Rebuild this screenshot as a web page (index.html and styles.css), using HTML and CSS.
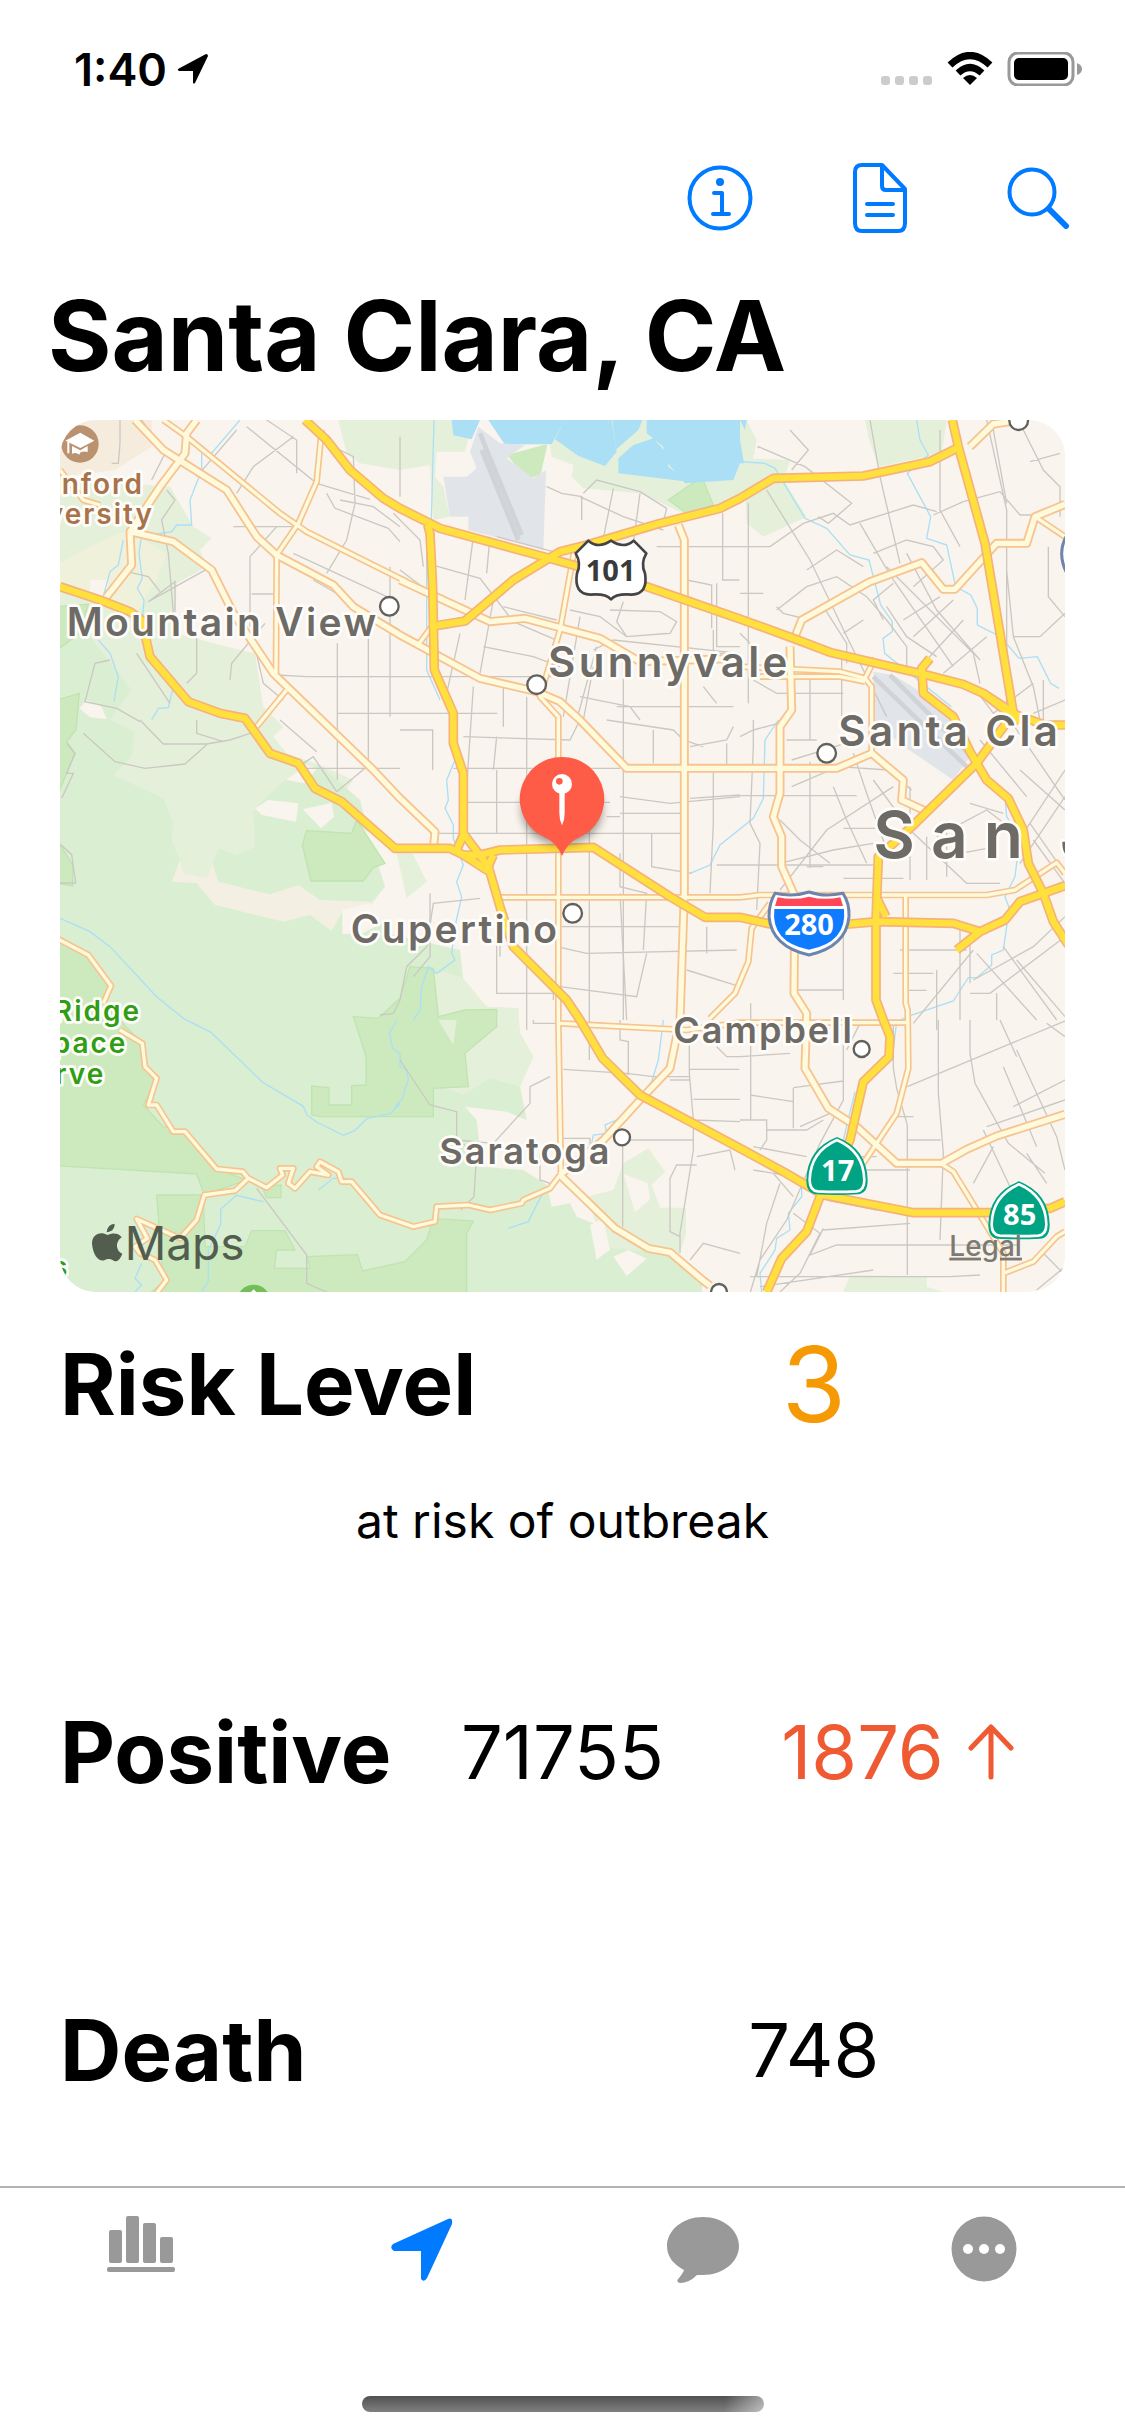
FILE: index.html
```html
<!DOCTYPE html>
<html lang="en">
<head>
<meta charset="utf-8">
<meta name="viewport" content="width=device-width">
<title>Santa Clara, CA</title>
<link rel="stylesheet" href="styles.css">
</head>
<body>
<div class="status">
  <div class="clock">
    <span>1:40</span>
    <svg width="32" height="32" viewBox="0 0 32 32"><path d="M1 16 29 1q2 0 2 2L18 30q-2 2-2-1V18H2q-2-1-1-2z" fill="#000"/></svg>
  </div>
  <div class="signals">
    <svg width="52" height="34" viewBox="0 0 52 34" fill="#ccc"><rect y="24" width="9" height="9" rx="3"/><rect x="14" y="24" width="9" height="9" rx="3"/><rect x="28" y="24" width="9" height="9" rx="3"/><rect x="42" y="24" width="9" height="9" rx="3"/></svg>
    <svg width="46" height="34" viewBox="0 0 46 34" fill="none" stroke="#000" stroke-width="7"><path d="M3 13Q23-6 43 13"/><path d="M11 21q12-11 24 0"/><path d="M16 26q7-6 14 0l-7 7z" fill="#000" stroke="none"/></svg>
    <svg width="76" height="34" viewBox="0 0 76 34"><rect x="2" y="1" width="64" height="32" rx="9" fill="none" stroke="#999" stroke-width="3"/><rect x="7" y="6" width="54" height="22" rx="5"/><path d="M70 11q5 2 5 6t-5 6z" fill="#999"/></svg>
  </div>
</div>

<header class="toolbar">
  <button class="tool" aria-label="Information"><svg width="66" height="66" viewBox="0 0 66 66" fill="none" stroke="#007aff" stroke-width="4"><circle cx="33" cy="33" r="30.500"/><path d="M27 28h8v21M26 49h16" stroke-linecap="round" stroke-linejoin="round"/><circle cx="33" cy="17" r="4" fill="#007aff" stroke="none"/></svg></button>
  <button class="tool" aria-label="Report"><svg width="54" height="70" viewBox="0 0 54 70" fill="none" stroke="#007aff" stroke-width="4" stroke-linejoin="round"><path d="M29 2H9Q2 2 2 9v51q0 8 7 8h36q7 0 7-8V26zV23q0 4 4 4h19M14 41h26M14 52h26" stroke-linecap="round"/></svg></button>
  <button class="tool" aria-label="Search"><svg width="64" height="62" viewBox="0 0 64 62" fill="none" stroke="#007aff" stroke-linecap="round"><circle cx="25" cy="25" r="22.500" stroke-width="4"/><path d="m42 42 17 17" stroke-width="6"/></svg></button>
</header>

<main>
  <h1 class="title">Santa Clara, CA</h1>

  <svg class="map" viewBox="0 0 3015 2616" role="img" aria-label="Map of Santa Clara County">
    <rect width="3015" height="2616" fill="#f9f4ed"/>

    <!-- open land -->
    <g fill="#e5f0da">
      <path d="M0 170 150 185 330 200 400 320 455 355 420 390 440 440 350 490 345 640 540 690 585 700 610 860 670 920 640 950 680 1000 780 1035 880 1080 850 1120 900 1145 975 1400 930 1460 0 1500z"/>
      <path d="M835 0 860 100 900 130 1020 150 1110 135 1120 300 1170 290 1150 200 1125 170 1130 95 1215 95 1240 0z"/>
      <path d="M1300 0 1390 72 1470 75 1475 110 1540 135 1535 170 1570 205 1740 220 1870 280 1980 255 2060 225 2090 60 2060 0z"/>
      <path d="m2050 115 140 5-20 60 70 110-130 60-50-40z"/>
      <path d="m2415 0 10 50 30 90 190-38 15-102z"/>
      <path d="m1580 2330 80-20 30-80 75-45 50 70-40 40 25 68h78v82l-23 60-200 40z"/>
      <path d="m2370 2565 230 5v30l50 16h-300z"/>
    </g>
    <g fill="#f5ecdd"><path d="M0 0h275v80l-110 70-165 20z"/></g>
    <path d="M0 430 90 380 200 330 320 400 290 480 230 580 120 560 0 490z" fill="#f0f1db"/>
    <path d="M90 480h55v60l-55-20z" fill="#f9f4ed"/>
    <g fill="#daeed2">
      <path d="M0 620 90 650 215 810 150 900 225 935 215 1010 160 1065 310 1135 340 1210 335 1260 360 1320 370 1360 440 1375 475 1285 530 1305 585 1280 580 1170 675 1080 780 1035 900 1140 940 1300 975 1400 930 1450 980 1540 1200 1590 1210 1680 1280 1760 1370 1765 1380 1840 1420 1910 1380 2000 1400 2100 1340 2075 1215 2060 1250 2100 1265 2240 1390 2250 1460 2295 1475 2360 1530 2350 1550 2390 1600 2410 1610 2520 1650 2485 1820 2500 1930 2570 1925 2616 0 2616z"/>
      <path d="m1010 1300 40-15 50 100-60 50z" fill="#e5f0da"/>
      <path d="m1060 1680 90-25 60 20 70 85 95 5 5 75 40 70-40 90-90-25-80 50-50-20-60-100z" fill="#e5f0da"/>
    </g>
    <g fill="#f3efe2"><path d="m360 1320 10 40 70 15 18-45 17 55 155 38 85-28 65 45 155 5-10 25-75 0-35 63-65-48-80 20-205-50-55-65-75-5z"/></g>
    <g fill="#f9f4ed">
      <path d="m585 1165 40-25 90 10-7 55-103-20z"/><path d="m728 1168 87-20 7 42-39 35z"/><path d="m678 1080 62-44 30 10-35 44z"/>
      <path d="m847 1470 80-20 60 50-80 40-60 2z"/><path d="m80 840 45 20 15 37-50-5-32-27z"/>
      <path d="m1690 2262 73 27 7 50-45 38z"/><path d="m1590 2415 40-20 20 95-40 28z"/><path d="m1660 2510 45-20 55 26-60 52z"/><path d="m890 1215 50 30 10 35z"/>
    </g>

    <!-- parks -->
    <g fill="#cdeabf" stroke="#c0e4b0" stroke-width="4">
      <path d="m740 1232 135 8 15-40 85 130-35 13-30 40H753l-26-108z"/>
      <path d="M-9 560 85 553 60 640-9 690zM-9 840 58 820l-10 110-28 35 25 35-54 130zM-9 1260l47 75v63l-47-8z"/>
      <path d="M-9 1555 85 1605 153 1697 130 1750 247 1870 255 1940 290 1975 250 2055 310 2120 375 2135 470 2247 560 2280 433 2325 410 2262-9 2237z"/>
      <path d="M290 2325h140l5 155h120l20-48h100l30 58h-55l-7 55h107l-8-35 150-6 16 49 127-28 65-65 20-65 120 8-20 37v196H250l60-50z"/>
      <path d="m605 2300 58-5v38h-43z"/>
      <path d="m880 1790 75 5 65-60 30-95 70 5 15 145 80-20 95-2v52l-95 80 10 100-105 5v85H780l-25-5v-87l52 5v52h68v-58l43-2v-85z"/>
      <path d="m1340 105 110-30 12-1-20 90-40 12z" stroke="none"/><path d="m1825 240 100-70 35 85-80 25z"/>
    </g>
    <path d="m1135 1800 45 75 10-75z" fill="#e5f0da"/>

    <!-- water -->
    <g fill="#abdff5">
      <path d="M1175 0h85l-25 58-55-12zM1285 0h230l-40 72-140 2zM1515 0h140l15 95-35 43-80-30-70-50zM1657 0h90l-12 30-66 58zM1760 0h280v130l-20 50-145 10-60-70-5-40-50-40zM1675 115l45-40 60-20 40 45 5 40 60 45-210-25z"/>
      <path d="M2040 0h20l-5 30zM2040 60l12 70-12 0z"/>
    </g>
    <g fill="none" stroke="#abdff5" stroke-width="4">
      <path d="m540 0-90 105M425 90v60l-35 90 5 75h-45l-15 20-60 10-30 0-8 55 10 75-15 30 20 35-5 60M190 360l-15 75-25 20-20 75M115 660l35 40 25 70-13 75M275 900l20-35 30-2 20-85M1122 0l-8 300M1100 400v350l40 90"/>
      <path d="m2040 125 75 5 30 15 90 150 65 30 70 80 57 15 35 135 35 50v30l-28 20 5 45 200 160M2570 0l10 60 25 45-63 55 70 130-12 65 60 20 27 125 45 25 20 40v50l70 35 55 65 55-5 40 80 25 15"/>
      <path d="m2155 900-40 60-5 175-30 60-100 80-30 60-60 25M1185 1020l-25 60 5 60-10 25 25 50v40l30 80-20 50 15 45-20 90-10 80 10 20-55 40-25-20-20 60-5 70-20 30"/>
      <path d="m0 1495 90 40 60 45 140 150 80 65 83 42 155 150 122 72 10 25 30 22 80 40 35-15 35-35 70-15 30-30M1010 1800l-22 40 10 45 22 15 0 40 20 10 5 30-20 60-20 20M775 2310l45-35h40M525 2325l85 20M530 2325l-48 42v45l-37 80v90l-20 34M245 2530l-20 45 20 20-20 20"/>
      <path d="m2835 1130 5 60 40 60-15 120-30 60 15 40-10 50-10 70-35 15v30l-45 38-25 0-45 70-125 42-45 20-10 80M2385 2015l-35 145M2225 2300v30l-40 50 5 50-40 25-5 35-45 70 5 56M1810 1800l-15 120-20 65-40 50-30 50-70 30 5 25-40 5-10 50-40 50-50 20-15 25-35 25-45 90-60 20"/>
    </g>

    <!-- airfields -->
    <g fill="#e1e5ea"><path d="m1255 20 65 50 75 5-55 40 80 60 38-25-8 240-225-60v-40l-55 0-20-120h70l30-25-20-50z"/><path d="m2440 755 60 10 180 110 60 120-60 85-140-95-100-80z"/></g>
    <g fill="none" stroke="#d0d4d8" stroke-width="14"><path d="m1260 40 125 305M1265 90l110 270M2440 770l280 270M2490 765l240 240"/></g>

    <!-- local streets -->
    <g fill="none" stroke="#cbc8c3" stroke-width="4">
      <path d="M180 0v70l-5 60-20 0M245 0l70 100-40 80M560 20l210 170 160 48M530 30 410 170M620 0l90 60v100M700 50l-120 90-50 80M780 60l100 50 5 140-25 110-60 100M720 320l-200 0M840 240l100 20 80 60M800 220l25 45 160 60 35 40M650 320l-80 90v210M700 400l280 130M760 480l260 150M575 522h75M445 445l-180 100 80-60 0 90M200 455l65 15 35 45M320 210l25 30-40 60 20 100 20 240M230 700l100 150M150 720l-45 10-30 115 95 20 70 40M410 650v110l-30 30M510 780l5-50 100-120M650 765l90 5h750M832 670v410M925 600v430M990 440v450M832 880h480M740 1045h280M580 660l30 130 60 50"/>
      <path d="m240 900 70 72h130l70-12 60-20M70 940l95 85 90 20 120-13 65-58M410 900v40l80 25M660 900l110 95M830 1115l-70-105-30 20M830 1115l90-75M20 970l25 30-25 60 20 0-35 75M0 1272l35 32 12 85H0M960 1785l40-5 20-40 20-100 60-60 20-130 140-15M590 2305l150 200v85l60 26M1020 1920l90 135 80 20v85l60 40-8 130-40 40M1190 2160l110 10 110-120v-50l60-30"/>
      <path d="M1020 50v180M1000 280l80 80 10 80M1020 450l80 60M1240 350l-25 190M1290 350l-10 110M1310 350l170 45M1100 430l160 45 100 130 140 60M1460 200l45 20 60 10 0 70M1570 220l40-40 130 35 80 50-10 40M1660 205l-30 150M1740 220l-20 150M1560 230l130 60 120 40M1790 380h250M1988 280v200h50M1880 480l75 15 0 130M1970 490v190h70M1650 570l150 5 50 30-20 35-130 10-30-45 20-60M1530 570l90 20 80 60 120-10M1330 560l160 40M1270 680l150 30 80 30M1300 540l-40 220M1200 640l-40 180M1240 800l-20 300M1330 800v120M1400 830v1000M1600 690l60-30 380 40M1560 590l-50 300M1600 740l-30 160M1690 700v1100M1670 860h350M1560 830l150 30 30 40M1960 630v70h80M1930 800l40 50M1550 900l60-220"/>
      <path d="M1020 930h98v120M1210 950l320 10 30-60M1640 900l200 30 30 30 60 20M1780 930v100M1180 1045h500M1210 1147h440M1110 1240h760M1310 1050v190M1310 950l-10 100M1588 1040v880M1680 1130l150 20 210-20M1680 1180h180M1640 1190h40M1890 980l110-20 20-40M2000 970v70M1960 1050v160l-10 210M1775 1240v100l120 20M1890 1135l150-10M1970 1335h70M1680 1300v100l80 20-10 170M1870 1520h-380M1490 1580l90 20 450-10M1680 1420l20 380M1940 1520v80M1310 1520v200h180M1500 1700l230 30 30-130M1880 1650l160 50M1480 1740v-20M1110 1420v190l-50 60M1320 1540v70"/>
      <path d="m2040 950 40-20 75-20M2180 960h90M2080 900v80l-10 230 30 60-10 200M2040 1127h350M2040 1335h400M2195 1020l130-40 90-30M2160 1200l60 60 90 70M2160 1330l160-40 120-20M2250 1025v320M2195 1100l140-60 150 10 70 60M2320 1100l40 100 60 130M2380 1000l40 120 60 170M2500 1100l-200 130-140 180M2440 1080l110 150 170 160h100M2350 1225h150M2290 1340h-50M2350 1375h180M2550 1100v280M2600 1250v130M2660 1200v170M2700 1300l110-20M2630 1250l150-80 80 60M2350 1540v200M2520 1590h200M2700 1520v280M2500 1660h120M2630 1650v180M2540 1711h60M2200 1710h150M2730 1540v150M2560 1810l180-220M2740 1680l180-100 95-90M2730 1720h60l225-170M2810 1720v80M2750 1600l180 200M2830 1580l160 220M2870 1620l145 170M2760 960l140 170M2850 900l165 240M2870 1270l145-220M2880 1330l135-200M2920 1260l95 130M2910 1210l105 150M2880 1050l135 120M2730 1150l100 30"/>
      <path d="M2095 85v-5l140 60 140 110-70 60-30-20M2120 210l130 210 120 250 110 220M2190 30l55 60-50 60M2065 250v600M2040 380l90 0 100-70 90-30 50 35 190-60 70 20M2400 310l70 120 30 50 180 260M2430 0l30 170 60 260M2640 30v240l60 110M2620 285l90-40 110-30 60 70 60 0M2780 0l60 270v600M2800 30l40 220M2890 30l60 120 50 50v90M3000 100l-90 25M2965 380v150l50 60M2840 450l20 200 60 150 20 100M2860 650h80l75-70M2150 570l90-70 90-30 90 60 60 70 60 80v60l80 40M2150 560l20 20 80 20M2240 450l90-60 80 50M2480 560l60 90 90 60M2440 400l100-40 80 20 30 40-90 80M2500 490l-60 50 30 60M2480 440l260 260 20 90M2540 400l90 170 130 150M2530 600l110-70M2560 650l120-110M2600 720l110-120M2650 760l130-110M2350 640l60-40M2290 560l70 110v60M2040 520h70M2040 640l30 30M2080 780l70 40h200M2250 780v180M2345 700v200M2740 800l60 80 120-90M2920 880l95-40M2950 900v-120"/>
      <path d="M1510 1948l190 12 80 10h110M1680 1800v60l25 5v100M1510 2155h80v60M1700 2160h200M1688 2170v250M1888 1860v100l12 140v90l-40 250v60M1888 1948h150M1830 1980h60M1900 2038h140M1900 2100l140 5M1910 2210l100-20 15 60M1910 2235h-60l-20 40v160l30 15M1890 2520l40-50 110 30M1970 1880l30 30h40M1420 1800v10h80M1440 2200v80l30 10M2072 1750v350M2040 2100h80v60l-20 30M2040 1910l150-10M2200 2005v120M2200 2003l150-20M2070 2025l130 20M2120 2130h120l50-30M2220 2120l90-40M2350 1820v220l-70 130-100 230-80 120-30 100M2400 1810l-40 80M2500 1805v140l10 60 32 110v450M2542 2000l480-200M2635 1800v220l15 180-10 260M2730 1800v100l15 90 100 180 110 90M2542 2160h100M2500 2090l60 0M2080 2180l160 30M2400 2250l150 0M2300 2340l150 30M2080 2250l120 20M2290 2430l260-20M2290 2425l-40 80 80-30h550M2070 2570h600l90-5M2100 2600l340-50M2830 1940l100 240M2870 1890l120 260 25 100M2780 2120l235-80M2770 2130l80 170M2740 2290l60-110M2900 2200l60 90M2860 2060l155-80M2400 2210l50 0M2820 1800l50 110M2960 1810l55 40M2930 2610l85-70M2950 2500l60 60M2160 2290l-40 120-30 160M2200 2380l80 60-60 120-60 56M2140 2260l60 70"/>
    </g>

    <!-- main roads -->
    <defs>
      <g id="arterials">
        <path d="m225 0 85 90 55 35 135 85 90 140 60 55 170 90 60 65 140 85 240 130 170 40 70 30 60 55 140 145H2330l105-45 95 80-5 60 75 35"/>
        <path d="m410 0-30 40-5 60-75 100-90 135 5 100-75 95M210 335l130 30 115 85 65 130 120 180 300 290 80 85 105 100-5 55"/>
        <path d="M1020 480l270 125 105-10 225 60 120 70 300-10M1855 315l18 45v1060l-13 380-30 145-90 95-110 120-130 105"/>
        <path d="m2190 680 5 190-35 50v200l-20 70 25 60v90l40 90-3 290 38 60-5 165 70 120 85 55 120 110h135l75-42 90-40 205-65"/>
        <path d="m2205 650 20-50 205-115 155-57 65 80h35l125-138h90l25-80 90-37M2730 80l70-68 50-7"/>
        <path d="m1500 2265 165 160 100 60 65 12 100 85 20 15"/>
      </g>
      <g id="collectors">
        <path d="m310 0 70 50 280 230 80 55 300 150M0 150l70 90 50 15M785 30l-15 155-55 125-65 95-2 360M680 810l-90 110M1130 600l-60 80M1545 380l-45 250-60 200 55 60v910l8 465M1310 1432h730l60-7h680l85-15 125-82 25 32"/>
        <path d="M2040 740l300 15 75 20 20 25v200M2100 770h240l75 15M2415 775l30-60M2537 1425v325l6 20 2 175-35 135-100 150M2130 1450l-55 75-10 100-40 95-75 75M1500 1810l380 20 160-22h500M2645 2232l35 23 150 245v116M2830 2560l90-35 70-75 25-15M2925 290l90 60"/>
        <path d="m1500 2265-30 40-80 35-5 10-95 20-65-15-95 5-5 45-65 15-100-35-85-100h-30l-10-30-55-30-10 15 35 25-55-10-45 50-20-15 15-45h-40l8 20-48 38-55-28-17-20-78-8-95-112h-35l-50-80h-25l25-80-35-35-8-70-67-40M130 1750l23-53-68-92-95-50M565 2275l-40 37-92 13-23 75-50 55-130-58 32 58-37 25 15 20 45 20 35 60-35 46"/>
      </g>
      <g id="highways">
        <path d="m735 0 65 60 70 90 100 85 50 30 120 60 310 85 100 28 210 62 280 97 160 58 110 42 290 68 110 28 60 27 100 65 85 30 60 0"/>
        <path d="m1110 620 105-17 145-123 140-85 80-20 220-65 180-45 60-30 100-60 270-7 200-43 80-40M2677 0l18 80 80 290 85 510-110 150-195 190-60 55-40 35-7 190v240l22 60 20 50-3 60-77 75-40 175-40 90-50 80-40 105-75 80-45 101"/>
        <path d="m1103 315 7 25 8 160 5 250 57 130v90l30 90v180l75 100 35 120 40 120 160 160 40 60 68 115 112 110 300 160 130 70 120 70 270 53h230l180-13 45-20"/>
        <path d="m0 500 120 40 90 35 35 25 25 110 115 135 95 35 75 15 75 105 85 30 50 75 80 40 160 140h165l40 20h50l60-15 280-8 230 148 105 62h105l90 20h240l80-7 230 5 80 25 75-35 45-55 70-25 65-23M2760 1535l-70 55"/>
        <path d="m2610 715-25 30 5 75 90 70 50 105 50 85 65 55 45 95 15 100 45 90 30 85 45 70M2770 820l110 85M1210 1305l70 45 20-45M1190 1290l20-45M2448 1430l30 60M2710 2378"/>
      </g>
    </defs>
    <g fill="none" stroke-linejoin="round">
      <use href="#collectors" stroke="#f6c490" stroke-width="20"/><use href="#arterials" stroke="#f6c490" stroke-width="27"/>
      <use href="#collectors" stroke="#fffadb" stroke-width="10"/><use href="#arterials" stroke="#fffadb" stroke-width="16"/>
      <use href="#highways" stroke="#f6b27a" stroke-width="29"/><use href="#highways" stroke="#ffe03d" stroke-width="19"/>
    </g>

    <!-- town markers -->
    <g fill="#fff" stroke="#62605b" stroke-width="7">
      <circle cx="988" cy="559" r="28"/><circle cx="1430" cy="794" r="28"/><circle cx="2300" cy="1000" r="28"/><circle cx="1538" cy="1480" r="28"/><circle cx="2876" cy="2" r="28"/>
      <circle cx="2405" cy="1887" r="24"/><circle cx="1686" cy="2152" r="24"/><circle cx="1977" cy="2616" r="24"/>
    </g>
    <circle cx="60" cy="72" r="56" fill="#bb926f"/><path d="m16 62 45-24 42 24-42 22zM36 78l25 13 22-13v18q-22-5-25 8-8-8-22-3zM22 66h6v34h-6z" fill="#fff"/>
    <circle cx="581" cy="2645" r="51" fill="#72bf59"/><path d="m573 2616 8-8 8 8z" fill="#fff"/>
    <path d="M3018 350q-26 50 0 105" fill="#fff" stroke="#6d84ad" stroke-width="9"/>

    <!-- route shields -->
    <path d="M1585 362q30 26 68 0 38 26 68 0l38 38q-18 30-4 60 10 62-40 64-46-4-62 14-16-18-62-14-50-2-40-64 14-30-4-60z" fill="#fff" stroke="#444" stroke-width="8" stroke-linejoin="round"/>
    <text class="shield dark" x="1652" y="482">101</text>
    <path d="M2145 1420q55 12 102-4 45 16 102 4 20 30 18 70-8 90-120 115-112-25-120-115 0-40 18-70z" fill="#fff" stroke="#6d84ad" stroke-width="9"/>
    <path d="M2153 1432q50 10 94-2 46 12 94 2l8 26h-204z" fill="#ff4757"/><path d="M2143 1467h209q10 100-105 122-115-22-104-122z" fill="#0f7cff"/>
    <text class="shield" x="2247" y="1544">280</text>
    <g id="state" fill="#00a383"><path d="M2331 2151q90 35 92 130 0 40-30 42-62 4-124 0-30-2-30-42 2-95 92-130z"/><path d="M2331 2160q80 35 82 120 0 32-24 34-58 3-116 0-24-2-24-34 2-85 82-120z" stroke="#fff" stroke-width="8"/></g>
    <use href="#state" x="546" y="133"/>
    <text class="shield" x="2333" y="2283">17</text><text class="shield" x="2879" y="2414">85</text>

    <!-- place names -->
    <g class="label">
      <text class="town" x="20" y="648">Mountain View</text>
      <text class="town large" x="1464" y="770">Sunnyvale</text>
      <text class="town large" x="2335" y="978">Santa Cla</text>
      <text class="town" x="872" y="1570">Cupertino</text>
      <text class="suburb" x="1840" y="1868">Campbell</text>
      <text class="suburb" x="1138" y="2232">Saratoga</text>
      <text class="city" x="2440" y="1315">San</text><text class="city" x="3000" y="1315">J</text>
      <text class="campus" x="252" y="221">anford</text><text class="campus" x="282" y="312">versity</text>
      <text class="park" x="243" y="1802">Ridge</text><text class="park" x="202" y="1900">pace</text><text class="park" x="136" y="1992">rve</text><text class="park" x="28" y="2570">s</text>
    </g>

    <!-- pin -->
    <defs><filter id="soft" x="-30%" y="-30%" width="160%" height="160%"><feGaussianBlur stdDeviation="14"/></filter></defs>
    <ellipse cx="1506" cy="1170" rx="120" ry="105" opacity=".4" filter="url(#soft)"/>
    <path d="M1506 1011a126 126 0 0 1 50 242q-32 12-50 55-18-43-50-55a126 126 0 0 1 50-242z" fill="#ff5c48"/>
    <circle cx="1506" cy="1092" r="30" fill="#fff"/><circle cx="1498" cy="1084" r="10" fill="#ff5c48"/><path d="M1498 1118h16v60q0 22-8 38-8-16-8-38z" fill="#fff"/>

    <!-- attribution -->
    <g fill="#525d4f"><path d="M140 2437q16-4 18-8 7-8 6-18-22 2-24 26zM142 2445c14-6 32-8 43 7-22 15-16 43 2 49-6 17-18 29-28 20-9-5-17-5-26 0-17 4-34-15-37-50 0-28 25-38 46-26z"/>
      <text class="brand" x="194" y="2520">Maps</text></g>
    <a href="#legal"><text class="legal" x="2668" y="2507">Legal</text></a>
  </svg>

  <dl class="stats">
    <div class="row risk"><dt>Risk Level</dt><dd class="level">3</dd></div>
    <div class="note"><dt class="hidden">Meaning</dt><dd>at risk of outbreak</dd></div>
    <div class="row"><dt>Positive</dt><dd>71755</dd><dd class="rise">1876 <svg width="46" height="56" viewBox="0 0 46 56" role="img" aria-label="up" fill="none" stroke="#f05a32" stroke-width="5" stroke-linecap="round" stroke-linejoin="round"><path d="M23 53V4M3 24 23 3l20 21"/></svg></dd></div>
    <div class="row"><dt>Death</dt><dd>748</dd></div>
  </dl>
</main>

<nav class="tabs">
  <a href="#stats" class="tab" aria-label="Statistics"><svg width="68" height="66" viewBox="0 0 68 66" fill="#999"><rect x="2" y="14" width="13" height="33" rx="2"/><rect x="19" width="13" height="47" rx="2"/><rect x="36" y="7" width="13" height="40" rx="2"/><rect x="53" y="21" width="13" height="26" rx="2"/><rect y="51" width="68" height="5" rx="2"/></svg></a>
  <a href="#nearby" class="tab" aria-label="Nearby" aria-current="page"><svg width="62" height="66" viewBox="0 0 62 66" fill="#007aff"><path d="M2 28 57 3q5-2 4 5L36 62q-3 5-6 1V35H3q-5-3-1-7z"/></svg></a>
  <a href="#chat" class="tab" aria-label="Messages"><svg width="74" height="68" viewBox="0 0 74 68" fill="#999"><path d="M37 1c20 0 36 13 36 29S57 59 37 59q-4 0-6 0-8 8-17 8-5-1-1-5 4-5 5-8Q1 45 1 30C1 14 17 1 37 1z"/></svg></a>
  <a href="#more" class="tab" aria-label="More"><svg width="66" height="66" viewBox="0 0 66 66" fill="#999"><circle cx="33" cy="33" r="32.500"/><g fill="#fff"><circle cx="17" cy="33" r="5"/><circle cx="33" cy="33" r="5"/><circle cx="49" cy="33" r="5"/></g></svg></a>
</nav>
<div class="home"></div>
</body>
</html>
```
FILE: styles.css
```css
* { box-sizing: border-box; }
body {
  margin: 0;
  min-height: 100vh;
  display: flex;
  flex-direction: column;
  background: #fff;
  color: #000;
  font-family: Inter, "Liberation Sans", sans-serif;
}
svg { display: block; flex: none; }
.status {
  display: flex;
  justify-content: space-between;
  align-items: center;
  height: 138px;
  padding: 0 42px 0 74px;
}
.clock { display: flex; align-items: center; gap: 10px; font-size: 45px; font-weight: 600; }
.signals { display: flex; align-items: center; gap: 14px; }
.toolbar {
  display: flex;
  justify-content: flex-end;
  align-items: center;
  gap: 100px;
  height: 120px;
  padding: 0 54px;
}
.tool { padding: 0; border: 0; background: none; }
main { flex: 1; padding: 0 60px; }
.title {
  margin: 0 -12px;
  height: 162px;
  font-size: 97px;
  line-height: 156px;
  font-weight: 700;
}
.map { width: 100%; height: auto; border-radius: 36px; }
.label { fill: #6e6b66; stroke: #fffdfa; stroke-width: 16px; stroke-linejoin: round; paint-order: stroke; font-weight: 600; }
.town { font-size: 117px; letter-spacing: 7px; }
.large { font-size: 126px; letter-spacing: 10px; }
.suburb { font-size: 108px; letter-spacing: 6px; }
.city { font-size: 192px; letter-spacing: 48px; }
.campus, .park { font-size: 84px; letter-spacing: 6px; text-anchor: end; }
.campus { fill: #a8734a; }
.park { fill: #2f9e12; }
.shield { font-size: 87px; font-weight: 700; font-family: "Open Sans", sans-serif; fill: #fff; text-anchor: middle; }
.dark { fill: #3a3a3a; }
.brand { font-size: 138px; }
.legal { font-size: 84px; font-weight: 500; fill: #7d7973; text-decoration: underline; }

.stats { margin: 0; }
.row { display: flex; align-items: center; height: 200px; margin-bottom: 98px; }
.row > * { flex: 1 1 0; }
.row dt { font-size: 85px; font-weight: 700; white-space: nowrap; }
.stats dd { margin: 0; font-size: 74px; text-align: center; }
.risk { height: 184px; margin: 0; }
.stats .level { font-size: 104px; color: #f59a05; }
.note { margin-bottom: 86px; }
.stats .note dd { font-size: 48px; line-height: 90px; }
.hidden { position: absolute; width: 1px; height: 1px; overflow: hidden; clip-path: inset(50%); }
.stats .rise { display: flex; justify-content: center; align-items: center; gap: 24px; color: #f05a32; }

.tabs { display: flex; height: 170px; border-top: 2px solid #b3b3b3; }
.tab { flex: 1; display: flex; justify-content: center; padding-top: 28px; }
.home {
  width: 402px;
  height: 16px;
  margin: 40px auto 24px;
  border-radius: 8px;
  background: linear-gradient(100deg, transparent 90%, #ffffff80), linear-gradient(#505050, #808080);
}
.row:last-child { margin-bottom: 36px; }
```
